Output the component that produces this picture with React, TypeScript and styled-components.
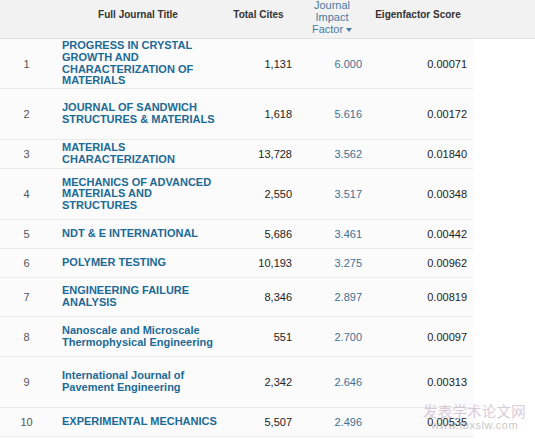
import React from "react";
import styled, { createGlobalStyle } from "styled-components";

const Global = createGlobalStyle`
  html, body { margin: 0; padding: 0; background: #ffffff; }
  body { font-family: "Liberation Sans", Arial, sans-serif; }
`;

const COLS = "52px 180px 65px 70px 106px";

const Page = styled.div`
  position: relative;
  width: 535px;
  height: 439px;
  overflow: hidden;
  background: #ffffff;
`;

const HeaderBar = styled.div`
  display: grid;
  grid-template-columns: ${COLS} 1fr;
  height: 39px;
  box-sizing: border-box;
  background: #f2f2f2;
  border-bottom: 1px solid #e2e2e2;
`;

const HeadCell = styled.div<{ $pr?: number }>`
  font-size: 10px;
  font-weight: bold;
  line-height: 12px;
  color: #333333;
  text-align: center;
  padding-top: 9px;
  padding-right: ${(p) => p.$pr ?? 0}px;
`;

const SortHead = styled.div`
  font-size: 11px;
  line-height: 12px;
  color: #4a7ca2;
  text-align: center;
  padding-top: 0;
  margin-top: -1px;
`;

const Caret = styled.span`
  display: inline-block;
  width: 0;
  height: 0;
  margin-left: 3px;
  vertical-align: middle;
  border-left: 3.5px solid transparent;
  border-right: 3.5px solid transparent;
  border-top: 4px solid #4a7ca2;
`;

const Body = styled.div`
  width: 473px;
`;

const Row = styled.div<{ $h: number }>`
  display: grid;
  grid-template-columns: ${COLS};
  align-items: center;
  height: ${(p) => p.$h}px;
  box-sizing: border-box;
  background: #fbfbfb;
  border-bottom: 1px solid #ebebeb;
`;

const Rank = styled.div`
  font-size: 11px;
  color: #555555;
  text-align: center;
  padding-left: 1px;
`;

const Title = styled.div`
  font-size: 11px;
  font-weight: bold;
  line-height: 11.6px;
  color: #1d6a95;
  padding-left: 10px;
  padding-right: 8px;
`;

const Num = styled.div<{ $pr: number; $tone?: "dark" | "blue" }>`
  font-size: 11px;
  text-align: right;
  padding-right: ${(p) => p.$pr}px;
  color: ${(p) => (p.$tone === "blue" ? "#3f6f92" : "#222222")};
`;

const Watermark = styled.div`
  position: absolute;
  left: 423px;
  top: 402px;
  display: flex;
  flex-direction: column;
  align-items: flex-start;
  pointer-events: none;
`;

const WmCn = styled.span`
  font-family: "Noto Sans CJK SC", "Liberation Sans", sans-serif;
  font-size: 14.5px;
  line-height: 18px;
  color: rgba(205, 185, 205, 0.75);
  letter-spacing: 0.2px;
`;

const WmUrl = styled.span`
  font-family: "Liberation Sans", Arial, sans-serif;
  font-size: 11px;
  line-height: 12px;
  margin-left: 8px;
  margin-top: -1px;
  color: rgba(150, 150, 150, 0.55);
  letter-spacing: 0.5px;
`;

type Journal = {
  rank: number;
  title: string;
  cites: string;
  jif: string;
  eigen: string;
  h: number;
};

const DATA: Journal[] = [
  { rank: 1, title: "PROGRESS IN CRYSTAL GROWTH AND CHARACTERIZATION OF MATERIALS", cites: "1,131", jif: "6.000", eigen: "0.00071", h: 50 },
  { rank: 2, title: "JOURNAL OF SANDWICH STRUCTURES & MATERIALS", cites: "1,618", jif: "5.616", eigen: "0.00172", h: 51 },
  { rank: 3, title: "MATERIALS CHARACTERIZATION", cites: "13,728", jif: "3.562", eigen: "0.01840", h: 29 },
  { rank: 4, title: "MECHANICS OF ADVANCED MATERIALS AND STRUCTURES", cites: "2,550", jif: "3.517", eigen: "0.00348", h: 51 },
  { rank: 5, title: "NDT & E INTERNATIONAL", cites: "5,686", jif: "3.461", eigen: "0.00442", h: 29 },
  { rank: 6, title: "POLYMER TESTING", cites: "10,193", jif: "3.275", eigen: "0.00962", h: 29 },
  { rank: 7, title: "ENGINEERING FAILURE ANALYSIS", cites: "8,346", jif: "2.897", eigen: "0.00819", h: 39 },
  { rank: 8, title: "Nanoscale and Microscale Thermophysical Engineering", cites: "551", jif: "2.700", eigen: "0.00097", h: 40 },
  { rank: 9, title: "International Journal of Pavement Engineering", cites: "2,342", jif: "2.646", eigen: "0.00313", h: 51 },
  { rank: 10, title: "EXPERIMENTAL MECHANICS", cites: "5,507", jif: "2.496", eigen: "0.00535", h: 29 },
];

export default function App() {
  return (
    <Page>
      <Global />
      <HeaderBar>
        <HeadCell />
        <HeadCell $pr={8}>Full Journal Title</HeadCell>
        <HeadCell $pr={12}>Total Cites</HeadCell>
        <SortHead>
          Journal
          <br />
          Impact
          <br />
          Factor
          <Caret />
        </SortHead>
        <HeadCell $pr={4}>Eigenfactor Score</HeadCell>
        <div />
      </HeaderBar>
      <Body>
        {DATA.map((j) => (
          <Row key={j.rank} $h={j.h}>
            <Rank>{j.rank}</Rank>
            <Title>{j.title}</Title>
            <Num $pr={5}>{j.cites}</Num>
            <Num $pr={5} $tone="blue">{j.jif}</Num>
            <Num $pr={6}>{j.eigen}</Num>
          </Row>
        ))}
      </Body>
      <Watermark>
        <WmCn>发表学术论文网</WmCn>
        <WmUrl>www.fbxslw.com</WmUrl>
      </Watermark>
    </Page>
  );
}
